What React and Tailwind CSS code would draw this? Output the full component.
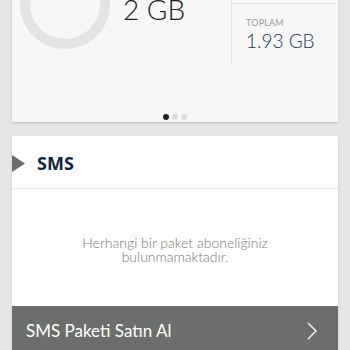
import React from "react";

export default function App() {
  return (
    <div className="w-[350px] h-[350px] overflow-hidden bg-[#e6e6e6] px-3" style={{ fontFamily: "Lato, 'Open Sans', sans-serif" }}>
      {/* Card 1 */}
      <div className="-mt-[60px] h-[182px] bg-[#f7f7f7] shadow-[0_1px_2px_rgba(0,0,0,0.18)] flex flex-col">
        <div className="flex flex-1">
          <div className="ml-[8px] mt-[19px] w-[90px] h-[90px] rounded-full border-[10px] border-[#e4e4e4] shrink-0" />
          <div className="ml-[13px] mt-[55px] text-[28px] font-light leading-none text-[#222]" style={{ fontFamily: "Lato, sans-serif" }}>2 GB</div>
          <div className="ml-auto w-[107px] flex flex-col">
            <div className="border-l border-[#e2e2e2] h-[123px] flex flex-col">
              <div className="h-[64px] border-b border-[#e2e2e2] mr-[2px]" />
              <div className="pl-[14px] pt-[14px]">
                <div className="text-[9px] leading-none text-[#9a9a9a] tracking-[0.2px]">TOPLAM</div>
                <div className="mt-[4px] text-[19px] leading-none font-light text-[#1e3656]">1.93 GB</div>
              </div>
            </div>
          </div>
        </div>
        <div className="flex justify-center items-end gap-[3px] pb-[2px] h-[14px]">
          <span className="w-[6px] h-[6px] rounded-full bg-[#222]" />
          <span className="w-[6px] h-[6px] rounded-full bg-[#dcdcdc]" />
          <span className="w-[6px] h-[6px] rounded-full bg-[#dcdcdc]" />
        </div>
      </div>

      {/* Card 2 */}
      <div className="mt-[14px] bg-white shadow-[0_1px_2px_rgba(0,0,0,0.15)] flex flex-col">
        <div className="h-[53px] pt-[2px] flex items-center border-b border-[#e8e8e8]">
          <svg width="13" height="17" viewBox="0 0 13 17" className="shrink-0">
            <polygon points="0,0 13,8.5 0,17" fill="#6b6b6b" />
          </svg>
          <span className="ml-[12px] text-[18px] font-bold text-[#0f2542]" style={{ fontFamily: "'Open Sans', sans-serif" }}>SMS</span>
        </div>
        <div className="h-[117px] flex items-center justify-center">
          <p className="text-center text-[14px] leading-[14px] font-light text-[#777] mt-[5px]">
            Herhangi bir paket aboneliğiniz
            <br />
            bulunmamaktadır.
          </p>
        </div>
        <div className="h-[50px] bg-[#6b6e6b] flex items-center pl-[14px] pr-[20px]">
          <span className="text-[17px] text-white font-normal">SMS Paketi Satın Al</span>
          <svg className="ml-auto" width="12" height="18" viewBox="0 0 12 18">
            <polyline points="2,1 10,9 2,17" fill="none" stroke="#e9e9e9" strokeWidth="1.6" />
          </svg>
        </div>
      </div>
    </div>
  );
}
